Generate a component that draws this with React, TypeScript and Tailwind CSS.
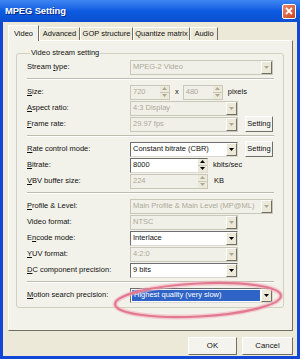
import React from 'react';

type FieldProps = {
  value: string;
  width: string;
  disabled?: boolean;
  selected?: boolean;
};

const DownArrow = ({ disabled }: { disabled?: boolean }) => (
  <div className="w-[11px] shrink-0 flex items-center justify-center bg-[#ECE9D8] border border-t-white border-l-white border-r-[#716F64] border-b-[#716F64]">
    <svg width="5" height="3" viewBox="0 0 5 3">
      <path d="M0 0h5L2.5 3z" fill={disabled ? '#ACA899' : '#000'} />
    </svg>
  </div>
);

const Combo = ({ value, width, disabled, selected }: FieldProps) => (
  <div
    className={`${width} h-[15px] shrink-0 flex border ${
      disabled
        ? 'bg-[#F1F0E8] border-[#C9C7BA] text-[#ACA899]'
        : 'bg-white border-t-[#6E6E6E] border-l-[#6E6E6E] border-r-[#DCDAD0] border-b-[#DCDAD0]'
    }`}
  >
    <div className={`flex-1 flex items-center pl-[2px] ${selected ? 'bg-[#2F63C6] text-white m-[1px] pl-[1px]' : ''}`}>
      {value}
    </div>
    <DownArrow disabled={disabled} />
  </div>
);

const Spin = ({ value, width, disabled }: FieldProps) => (
  <div
    className={`${width} h-[15px] shrink-0 flex border ${
      disabled
        ? 'bg-[#F1F0E8] border-[#C9C7BA] text-[#ACA899]'
        : 'bg-white border-t-[#6E6E6E] border-l-[#6E6E6E] border-r-[#DCDAD0] border-b-[#DCDAD0]'
    }`}
  >
    <div className="flex-1 flex items-center pl-[2px]">{value}</div>
    <div className="w-[9px] flex flex-col bg-[#ECE9D8]">
      <div className="flex-1 flex items-center justify-center border-b border-[#C9C7BA]">
        <svg width="5" height="3" viewBox="0 0 5 3">
          <path d="M2.5 0L5 3H0z" fill={disabled ? '#ACA899' : '#000'} />
        </svg>
      </div>
      <div className="flex-1 flex items-center justify-center">
        <svg width="5" height="3" viewBox="0 0 5 3">
          <path d="M0 0h5L2.5 3z" fill={disabled ? '#ACA899' : '#000'} />
        </svg>
      </div>
    </div>
  </div>
);

const SmallButton = ({ label }: { label: string }) => (
  <div className="ml-[7px] w-[28px] h-[16px] flex items-center justify-center bg-[#F4F3EE] border border-t-white border-l-white border-r-[#716F64] border-b-[#716F64] rounded-[1px]">
    {label}
  </div>
);

const Label = ({ pre = '', u, post = '' }: { pre?: string; u: string; post?: string }) => (
  <span className="w-[103px] shrink-0 whitespace-nowrap">
    {pre}
    <span className="underline">{u}</span>
    {post}
  </span>
);

const Row = ({ children }: { children: React.ReactNode }) => (
  <div className="h-[16px] flex items-center">{children}</div>
);

const Sep = () => <div className="h-[2px] mt-[3px] mb-[4px] border-t border-b border-t-[#BEBCAE] border-b-white" />;

const tabs = [
  { label: 'Advanced', w: 'w-[41px]' },
  { label: 'GOP structure', w: 'w-[53px]' },
  { label: 'Quantize matrix', w: 'w-[57px]' },
  { label: 'Audio', w: 'w-[28px]' },
];

export default function App() {
  return (
    <div className="relative w-[300px] h-[359px] bg-[#1247D8] flex flex-col font-['Liberation_Sans',Arial,sans-serif] text-[7.5px] leading-none text-[#111] overflow-hidden">
      {/* Title bar */}
      <div className="h-[22px] shrink-0 flex items-center justify-between pl-[5px] pr-[4px] bg-linear-to-b from-[#3F86F2] via-[#0C5BE0] to-[#0B4FD2]">
        <span className="text-white font-bold text-[9.4px] tracking-[-0.1px] [text-shadow:1px_1px_0_#0A2A8A]">MPEG Setting</span>
        <div className="w-[14px] h-[15px] rounded-[2px] border border-white bg-linear-to-br from-[#E98A66] to-[#C8431E] flex items-center justify-center">
          <svg width="8" height="8" viewBox="0 0 8 8">
            <path d="M1 1L7 7M7 1L1 7" stroke="#fff" strokeWidth="1.8" />
          </svg>
        </div>
      </div>

      {/* Body */}
      <div className="flex-1 mx-[3px] mb-[3px] bg-[#ECE9D8] flex flex-col pt-[3px] pl-[5px] pr-[4px]">
        {/* Tabs */}
        <div className="h-[15px] flex items-end relative z-10">
          <div className="w-[31px] h-[16px] -mb-[1px] flex items-center justify-center bg-[#F3F2EA] border-t border-l border-r border-t-white border-l-white border-r-[#716F64]">
            Video
          </div>
          {tabs.map((t) => (
            <div
              key={t.label}
              className={`${t.w} h-[13px] flex items-center justify-center border-t border-l border-r border-t-white border-l-white border-r-[#716F64]`}
            >
              {t.label}
            </div>
          ))}
        </div>

        {/* Tab panel */}
        <div className="h-[291px] bg-[#F3F2EA] border border-t-white border-l-white border-r-[#716F64] border-b-[#716F64] pt-[7px] pl-[7px] pr-[8px]">
          <fieldset className="border border-[#D0D0BF] rounded-[3px] pl-[10px] pr-[9px] pt-[1px] pb-[4px]">
            <legend className="ml-[3px] px-[1px] leading-[10px]">Video stream setting</legend>

            <Row>
              <Label pre="Stream " u="t" post="ype:" />
              <Combo value="MPEG-2 Video" width="w-[143px]" disabled />
            </Row>
            <Sep />
            <Row>
              <Label u="S" post="ize:" />
              <Spin value="720" width="w-[40px]" disabled />
              <span className="ml-[5px] mr-[4px]">x</span>
              <Spin value="480" width="w-[40px]" disabled />
              <span className="ml-[5px]">pixels</span>
            </Row>
            <Row>
              <Label u="A" post="spect ratio:" />
              <Combo value="4:3 Display" width="w-[108px]" disabled />
            </Row>
            <Row>
              <Label u="F" post="rame rate:" />
              <Combo value="29.97 fps" width="w-[108px]" disabled />
              <SmallButton label="Setting" />
            </Row>
            <Sep />
            <Row>
              <Label u="R" post="ate control mode:" />
              <Combo value="Constant bitrate (CBR)" width="w-[108px]" />
              <SmallButton label="Setting" />
            </Row>
            <Row>
              <Label u="B" post="itrate:" />
              <Spin value="8000" width="w-[78px]" />
              <span className="ml-[5px]">kbits/sec</span>
            </Row>
            <Row>
              <Label u="V" post="BV buffer size:" />
              <Spin value="224" width="w-[78px]" disabled />
              <span className="ml-[6px]">KB</span>
            </Row>
            <Sep />
            <Row>
              <Label u="P" post="rofile & Level:" />
              <Combo value="Main Profile & Main Level (MP@ML)" width="w-[143px]" disabled />
            </Row>
            <Row>
              <Label pre="Video format:" u="" />
              <Combo value="NTSC" width="w-[108px]" disabled />
            </Row>
            <Row>
              <Label pre="E" u="n" post="code mode:" />
              <Combo value="Interlace" width="w-[108px]" />
            </Row>
            <Row>
              <Label u="Y" post="UV format:" />
              <Combo value="4:2:0" width="w-[108px]" disabled />
            </Row>
            <Row>
              <Label u="D" post="C component precision:" />
              <Combo value="9 bits" width="w-[108px]" />
            </Row>
            <Sep />
            <Row>
              <Label u="M" post="otion search precision:" />
              <Combo value="Highest quality (very slow)" width="w-[143px]" selected />
            </Row>
          </fieldset>
        </div>

        {/* Dialog buttons */}
        <div className="flex justify-end gap-[5px] mt-[6px]">
          <div className="w-[49px] h-[18px] flex items-center justify-center text-[7.8px] bg-[#F4F3EE] border border-t-white border-l-white border-r-[#716F64] border-b-[#716F64]">
            OK
          </div>
          <div className="w-[51px] h-[18px] flex items-center justify-center text-[7.8px] bg-[#F4F3EE] border border-t-white border-l-white border-r-[#716F64] border-b-[#716F64]">
            Cancel
          </div>
        </div>
      </div>

      {/* Highlight ellipse drawn over the dialog */}
      <svg className="absolute left-[112px] top-[280px] pointer-events-none" width="172" height="40" viewBox="0 0 172 40">
        <g transform="rotate(-3 86 20)">
          <ellipse cx="86" cy="20" rx="83" ry="16.5" fill="none" stroke="#F2B6C2" strokeWidth="5" opacity="0.6" />
          <ellipse cx="86" cy="20" rx="83" ry="16.5" fill="none" stroke="#E27990" strokeWidth="2.2" />
        </g>
      </svg>
    </div>
  );
}
